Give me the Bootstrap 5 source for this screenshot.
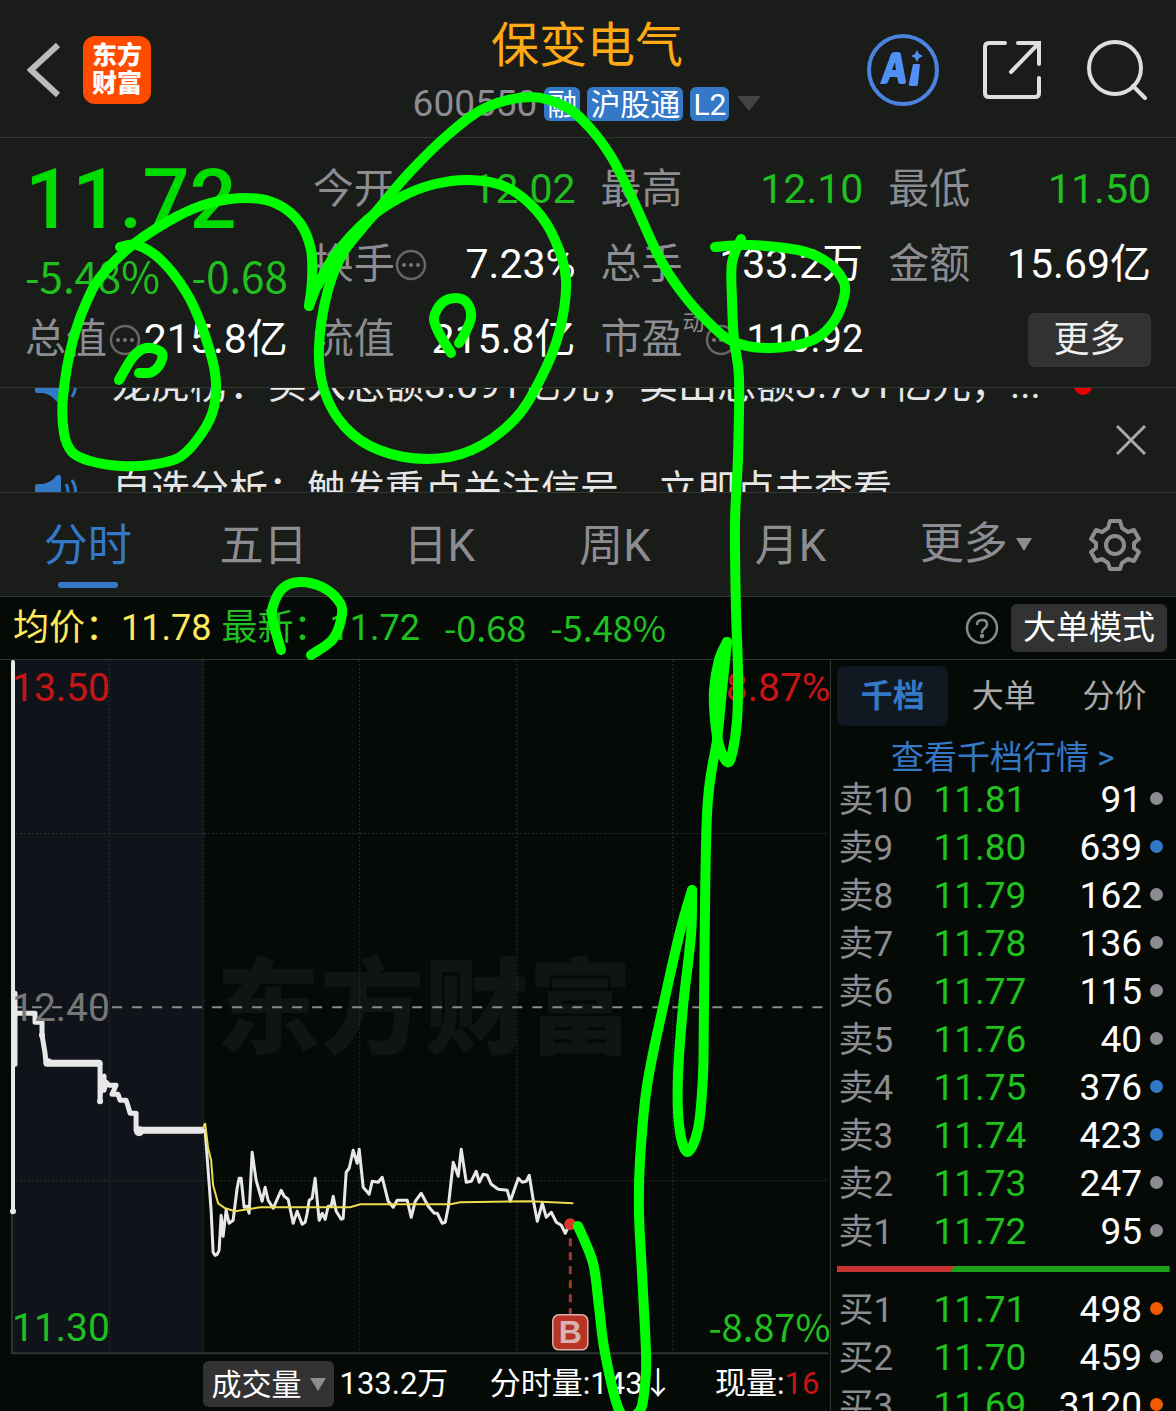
<!DOCTYPE html>
<html lang="zh-CN" data-bs-theme="dark">
<head>
<meta charset="utf-8">
<meta name="viewport" content="width=device-width, initial-scale=1">
<title>保变电气 600550</title>
<link href="https://cdn.jsdelivr.net/npm/bootstrap@5.3.0/dist/css/bootstrap.min.css" rel="stylesheet">
<style>
  :root { --panel:#191c19; --ink:#060a07; --rule:#333633; --muted:#8c8c92; --blue:#3478c8; --up:#c81414; --down:#1fc01f; --face:Roboto,"Noto Sans CJK SC",sans-serif; }
  body { margin:0; background:var(--ink); color:#fff; font-family:var(--face); }
  .quote-app { height:100vh; overflow:hidden; }
  .panel-bg { background:var(--panel); border-bottom:1px solid var(--rule); }
  .bare { background:none; border:0; padding:0; color:inherit; line-height:0; }
  .t-muted { color:var(--muted); } .t-blue { color:var(--blue); } .t-up { color:var(--up); } .t-down { color:var(--down); } .t-avg { color:#ffe95c; }
  .signed { font-family:"Noto Sans CJK SC",sans-serif; }
  svg { display:block; }

  .top-bar { height:138px; padding:3px 29px 0 27px; }
  .side { flex:1 1 0; }
  .tools { gap:43px; }
  .brand { width:68px; height:68px; margin-left:20px; border-radius:12px; background:#ff4b00; font-size:25px; line-height:28px; font-weight:900; padding-top:6px; }
  .stock-name { font-size:48px; line-height:58px; color:#ffa914; margin:0 0 10px; font-weight:400; font-family:"Noto Sans CJK SC",sans-serif; }
  .stock-code { font-size:37px; line-height:48px; }
  .tag { background:var(--blue); border-radius:6px; font-size:30px; line-height:36px; height:34px; padding:0 3px; margin-left:7px; }

  .stats { height:250px; padding:14px 25px 0; gap:25px; font-size:41px; }
  .stat-col { flex:1 1 0; min-width:0; }
  .stat { height:75px; line-height:75px; white-space:nowrap; }
  .last-price { font-size:83px; line-height:96px; height:96px; font-weight:500; color:#00dc00; }
  .change { height:54px; line-height:53px; font-size:42px; }
  .pe-mark { font-size:22px; line-height:42px; align-self:flex-start; }
  .pe-val { font-size:38px; }
  .more-btn { width:123px; height:54px; font-size:36px; line-height:50px; background:#323232; border:0; border-radius:6px; color:#eee; padding:0; }

  .ticker { height:105px; overflow:hidden; padding:0 30px 0 34px; }
  .ticker-list { margin-top:-55px; }
  .ticker-line { height:105px; gap:33px; font-size:39px; line-height:105px; white-space:nowrap; color:#e6e6e6; }
  .red-dot { width:18px; height:18px; border-radius:50%; background:#e60000; }

  .period-tabs { height:104px; padding-right:35px; font-size:44px; }
  .period-tabs a { color:var(--muted); text-decoration:none; flex:0 0 15.4%; line-height:107px; text-align:center; }
  .period-tabs a.current { color:var(--blue); position:relative; }
  .period-tabs a.current::after { content:""; position:absolute; left:50%; margin-left:-30px; bottom:8px; width:60px; height:6px; border-radius:3px; background:var(--blue); }
  .period-tabs a.wide { flex:1 1 0; padding-right:16px; }

  .info-bar { height:63px; padding:0 9px 0 13px; font-size:36px; line-height:62px; border-bottom:1px solid var(--rule); white-space:nowrap; }
  .info-bar .signed { line-height:58px; }
  .latest { margin-left:10px; }
  .mode-btn { width:156px; height:48px; border:0; border-radius:6px; background:#323232; color:#fff; font-size:33px; line-height:48px; padding:0; }

  .left-pane { flex:1 1 0; min-width:0; border-right:1px solid var(--rule); }
  .right-pane { flex:0 0 29.3%; padding:6px 6px 0; }
  .axis { position:absolute; font-size:39px; line-height:40px; }
  .axis.signed { font-size:38px; }
  .axis.start { left:12px; } .axis.end { right:0; }
  .axis.high { top:8px; } .axis.mid { top:328px; color:#777; } .axis.low { bottom:8px; } .axis.low.signed { bottom:10px; }
  .chart-foot { height:56px; padding:0 11px 0 24.5%; font-size:31px; line-height:52px; white-space:nowrap; }
  .vol-box { width:131px; height:46px; margin-right:5px; }
  .vol-box select { display:block; width:100%; height:46px; appearance:none; background:#323232; color:#fff; border:0; border-radius:6px; font:30px/42px "Noto Sans CJK SC",sans-serif; padding:0 0 4px 8px; }
  .vol-box svg { position:absolute; right:8px; top:17px; pointer-events:none; }

  .book-tabs button { flex:1 1 0; height:60px; border:0; border-radius:8px; background:none; color:#aaa; font-size:32px; line-height:60px; padding:0; }
  .book-tabs button.current { background:#101822; color:var(--blue); font-weight:700; }
  .book-link { display:block; text-align:center; color:var(--blue); text-decoration:none; font-size:33px; line-height:63px; height:51px; padding-right:2px; }
  .book { width:100%; border-collapse:collapse; table-layout:fixed; white-space:nowrap; }
  .book td, .book th { height:48px; line-height:44px; padding:0 0 2px; font-size:37px; font-weight:400; }
  .book th { width:96px; color:var(--muted); font-size:35px; line-height:48px; padding:0 0 0 1px; }
  .book .num { text-align:right; width:113px; }
  .book .mk { width:28px; }
  .lamp { display:block; width:13px; height:13px; border-radius:50%; background:#8c8c92; margin:0 0 3px 8px; }
  .lamp.b { background:#3478c8; } .lamp.o { background:#f05a00; }
  .ratio { display:block; width:100%; height:6px; margin:9px 0 15px; }
  .ink-layer { position:absolute; left:0; top:0; width:100%; pointer-events:none; }
</style>
<script src="https://cdn.jsdelivr.net/npm/bootstrap@5.3.0/dist/js/bootstrap.bundle.min.js"></script>
</head>
<body>
<div class="quote-app position-relative">

<header class="top-bar panel-bg d-flex align-items-center">
  <div class="side d-flex align-items-center">
    <button class="bare" aria-label="返回"><svg width="36" height="56" fill="none" stroke="#bbb" stroke-width="6"><path d="M31 3 4 28 31 53"/></svg></button>
    <div class="brand text-center">东方<br>财富</div>
  </div>
  <div class="text-center">
    <h1 class="stock-name">保变电气</h1>
    <div class="stock-code t-muted d-flex align-items-center">600550
      <span class="tag text-white">融</span><span class="tag text-white">沪股通</span><span class="tag text-white">L2</span>
      <svg class="ms-2" width="24" height="16"><path d="M0 0h24L12 15z" fill="#444"/></svg>
    </div>
  </div>
  <div class="side tools d-flex align-items-center justify-content-end">
    <button class="bare" aria-label="AI"><svg width="74" height="74"><circle cx="37" cy="37" r="34" fill="none" stroke="#4a84e0" stroke-width="4"/><path fill="#5090f5" fill-rule="evenodd" d="M14 51 25 21q1-2 4-2h3q3 0 3 3l5 27q0 2-2 2h-3q-3 0-3-3l-1-4h-7l-2 5q-1 2-3 2zM26 37h4l-1-8zM47 31h7l-2 20q0 2-3 2h-4q-3 0-2-3zM51 17l2 4 4 2-4 2-2 4-2-4-4-2 4-2z"/></svg></button>
    <button class="bare" aria-label="分享"><svg width="60" height="60" fill="none" stroke="#dedede" stroke-width="4" stroke-linecap="round"><path d="M22 3H6q-4 0-4 4v46q0 4 4 4h46q4 0 4-4V38M35 3h21v21M56 3 28 32"/></svg></button>
    <button class="bare" aria-label="搜索"><svg width="61" height="62" fill="none" stroke="#dedede" stroke-width="4" stroke-linecap="round"><circle cx="29" cy="29" r="26"/><path d="m47 47 12 12"/></svg></button>
  </div>
</header>

<section class="stats panel-bg d-flex">
  <div class="stat-col">
    <div class="last-price">11.72</div>
    <div class="change signed t-down d-flex justify-content-between"><span>-5.48%</span><span>-0.68</span></div>
    <div class="stat d-flex justify-content-between align-items-center"><span class="t-muted">总值</span><svg width="32" height="32"><circle cx="16" cy="16" r="14" fill="none" stroke="#666" stroke-width="2.5"/><g fill="#777"><circle cx="9" cy="16" r="2"/><circle cx="16" cy="16" r="2"/><circle cx="23" cy="16" r="2"/></g></svg><span>215.8亿</span></div>
  </div>
  <div class="stat-col">
    <div class="stat d-flex justify-content-between"><span class="t-muted">今开</span><span class="t-down">12.02</span></div>
    <div class="stat d-flex align-items-center"><span class="t-muted">换手</span><svg width="32" height="32"><circle cx="16" cy="16" r="14" fill="none" stroke="#666" stroke-width="2.5"/><g fill="#777"><circle cx="9" cy="16" r="2"/><circle cx="16" cy="16" r="2"/><circle cx="23" cy="16" r="2"/></g></svg><span class="ms-auto">7.23%</span></div>
    <div class="stat d-flex justify-content-between"><span class="t-muted">流值</span><span>215.8亿</span></div>
  </div>
  <div class="stat-col">
    <div class="stat d-flex justify-content-between"><span class="t-muted">最高</span><span class="t-down">12.10</span></div>
    <div class="stat d-flex justify-content-between"><span class="t-muted">总手</span><span>133.2万</span></div>
    <div class="stat d-flex align-items-center"><span class="t-muted">市盈</span><span class="pe-mark t-muted">动</span><svg width="32" height="32"><circle cx="16" cy="16" r="14" fill="none" stroke="#666" stroke-width="2.5"/><g fill="#777"><circle cx="9" cy="16" r="2"/><circle cx="16" cy="16" r="2"/><circle cx="23" cy="16" r="2"/></g></svg><span class="pe-val ms-auto">110.92</span></div>
  </div>
  <div class="stat-col">
    <div class="stat d-flex justify-content-between"><span class="t-muted">最低</span><span class="t-down">11.50</span></div>
    <div class="stat d-flex justify-content-between"><span class="t-muted">金额</span><span>15.69亿</span></div>
    <div class="stat d-flex justify-content-end align-items-center"><button class="more-btn">更多</button></div>
  </div>
</section>

<section class="ticker panel-bg d-flex align-items-center justify-content-between">
  <div class="ticker-list align-self-start">
    <div class="ticker-line d-flex align-items-center"><svg width="45" height="34" fill="#3478c8"><path d="M1 12q0-2 3-2h5q9-2 13-8 4-3 5 1v28q-1 4-5 1-4-6-13-8H4q-3 0-3-2z"/><path d="M32 10q4 7 0 14M38 6q7 11 0 22" fill="none" stroke="#3478c8" stroke-width="3"/></svg><span>龙虎榜：买入总额3.091亿元，卖出总额3.761亿元，...</span><span class="red-dot"></span></div>
    <div class="ticker-line d-flex align-items-center"><svg width="45" height="34" fill="#3478c8"><path d="M1 12q0-2 3-2h5q9-2 13-8 4-3 5 1v28q-1 4-5 1-4-6-13-8H4q-3 0-3-2z"/><path d="M32 10q4 7 0 14M38 6q7 11 0 22" fill="none" stroke="#3478c8" stroke-width="3"/></svg><span>自选分析：触发重点关注信号，立即点击查看</span></div>
  </div>
  <button class="bare" aria-label="关闭"><svg width="30" height="32" stroke="#aaa" stroke-width="3"><path d="M1 2 29 30M29 2 1 30"/></svg></button>
</section>

<nav class="period-tabs panel-bg d-flex">
  <a href="#" class="current">分时</a><a href="#">五日</a><a href="#">日K</a><a href="#">周K</a><a href="#">月K</a>
  <a href="#" class="wide d-flex align-items-center justify-content-center">更多<svg class="ms-2" width="16" height="14"><path d="M0 0h16L8 13z" fill="#8c8c92"/></svg></a>
  <button class="bare" aria-label="设置"><svg width="52" height="52" viewBox="0 0 52 52" fill="none" stroke="#8c8c92" stroke-width="4" stroke-linejoin="round"><path d="M21 2h10l2 7 6 4 6-2 5 9-5 4v5l5 4-5 9-6-2-6 4-2 6H21l-2-6-6-4-6 2-5-9 5-4v-5l-5-4 5-9 6 2 6-4z"/><circle cx="26" cy="26" r="9"/></svg></button>
</nav>

<div class="info-bar d-flex align-items-center">
  <span class="t-avg">均价：11.78</span>
  <span class="latest t-down d-flex"><span>最新：11.72</span><span class="signed ms-4">-0.68</span><span class="signed ms-4">-5.48%</span></span>
  <button class="bare ms-auto me-2 pe-1" aria-label="帮助"><svg width="34" height="34" fill="none" stroke="#8a8a8a" stroke-width="2.5"><circle cx="17" cy="17" r="15"/><path d="M12 14q0-5 5-5t5 4q0 3-3 5-2 1-2 4"/><circle cx="17" cy="25" r="1" /></svg></button>
  <button class="mode-btn">大单模式</button>
</div>

<main class="d-flex">
  <section class="left-pane">
    <div class="position-relative">
      <svg width="100%" viewBox="0 660 830 696">
        <rect x="12" y="660" width="192" height="693" fill="#10141a"/>
        <text x="216" y="1046" font-size="104" font-weight="900" fill="#111511">东方财富</text>
        <g stroke="#2c302d" stroke-dasharray="2 2"><path d="M109.5 660V1353M203.5 660V1353M359.5 660V1353M516.5 660V1353M672.5 660V1353M12 833.5H828M12 1180.5H828"/></g>
        <path d="M12 660V1353H828" fill="none" stroke="#303330" stroke-width="2"/>
        <path d="M12 1007H824" stroke="#8a8a8a" stroke-width="2" stroke-dasharray="10 10"/>
        <g fill="none" stroke="#e8e8e8" stroke-linejoin="round" stroke-linecap="round">
          <path stroke-width="4" d="M13 662V1211"/>
          <path stroke-width="5" d="M15 993V1013V1064M16 1013H35V1022H42V1035L45 1053L46 1063M100 1063V1101L101 1078L104 1076L104 1090L106 1082L109 1085H116L112 1094H118L120 1100H126L128 1106L130 1113H136V1130"/>
          <path stroke-width="7" d="M47 1063H99M138 1130H201"/>
          <path stroke-width="3" d="M205 1130 L208 1170 211 1210 213 1252 215 1255 217 1254 219 1250 221 1215 223 1236 226 1210 229 1223 233 1220 237 1188 239 1178 241 1178 244 1207 247 1206 249 1213 252 1152 256 1180 262 1201 265 1187 268 1200 273 1208 281 1190 284 1196 288 1199 293 1223 297 1211 302 1224 305 1222 307 1213 309 1200 312 1198 315 1178 317 1200 319 1220 322 1213 325 1219 328 1206 331 1206 333 1196 336 1211 341 1219 343 1218 346 1172 349 1168 353 1150 357 1163 359 1149 363 1187 369 1194 372 1181 378 1182 382 1177 388 1201 393 1207 397 1200 407 1200 411 1217 415 1201 421 1193 428 1206 434 1213 437 1213 442 1223 445 1222 448 1207 453 1162 458 1176 461 1149 466 1182 471 1181 476 1171 479 1182 483 1174 487 1175 491 1184 498 1189 507 1190 510 1201 518 1178 522 1182 526 1181 529 1175 533 1200 537 1221 542 1203 546 1217 551 1212 556 1222 561 1225 565 1233 570 1222"/>
        </g>
        <g fill="#e8e8e8"><circle cx="13" cy="1211" r="3"/><circle cx="42" cy="1035" r="3"/><circle cx="100" cy="1101" r="3"/><circle cx="139" cy="1131" r="5"/><circle cx="48" cy="1062" r="4"/></g>
        <path fill="none" stroke="#f0dc50" stroke-width="2" d="M203 1128 205 1123 208 1148 211 1160 213 1185 218 1203 225 1208 235 1211 260 1207 350 1207 360 1204 450 1204 460 1202 530 1201 573 1203"/>
        <circle cx="570" cy="1224" r="6" fill="#d8372b"/>
        <path d="M570 1238V1314" stroke="#a03a30" stroke-width="3" stroke-dasharray="8 6"/>
        <rect x="552.5" y="1314.500" width="35" height="35" rx="6" fill="#b83426" stroke="#dcb0aa" stroke-width="1.500"/>
        <text x="570" y="1343" text-anchor="middle" font-family="Liberation Sans, sans-serif" font-weight="700" font-size="32" fill="#d8b4b0">B</text>
      </svg>
      <span class="axis start high t-up">13.50</span>
      <span class="axis start mid">12.40</span>
      <span class="axis start low t-down">11.30</span>
      <span class="axis end high t-up">8.87%</span>
      <span class="axis end low signed t-down">-8.87%</span>
    </div>
    <div class="chart-foot d-flex align-items-center">
      <div class="vol-box position-relative"><select aria-label="指标"><option>成交量</option></select><svg width="16" height="14"><path d="M0 0h16L8 13z" fill="#8c8c92"/></svg></div>
      <span>133.2万</span><span class="ms-auto">分时量:143↓</span><span class="ms-auto">现量:<span class="t-up">16</span></span>
    </div>
  </section>

  <aside class="right-pane">
    <div class="book-tabs d-flex"><button class="current">千档</button><button>大单</button><button>分价</button></div>
    <a class="book-link" href="#">查看千档行情 &gt;</a>
    <table class="book">
      <tr><th>卖10</th><td class="t-down">11.81</td><td class="num">91</td><td class="mk"><i class="lamp"></i></td></tr>
      <tr><th>卖9</th><td class="t-down">11.80</td><td class="num">639</td><td class="mk"><i class="lamp b"></i></td></tr>
      <tr><th>卖8</th><td class="t-down">11.79</td><td class="num">162</td><td class="mk"><i class="lamp"></i></td></tr>
      <tr><th>卖7</th><td class="t-down">11.78</td><td class="num">136</td><td class="mk"><i class="lamp"></i></td></tr>
      <tr><th>卖6</th><td class="t-down">11.77</td><td class="num">115</td><td class="mk"><i class="lamp"></i></td></tr>
      <tr><th>卖5</th><td class="t-down">11.76</td><td class="num">40</td><td class="mk"><i class="lamp"></i></td></tr>
      <tr><th>卖4</th><td class="t-down">11.75</td><td class="num">376</td><td class="mk"><i class="lamp b"></i></td></tr>
      <tr><th>卖3</th><td class="t-down">11.74</td><td class="num">423</td><td class="mk"><i class="lamp b"></i></td></tr>
      <tr><th>卖2</th><td class="t-down">11.73</td><td class="num">247</td><td class="mk"><i class="lamp"></i></td></tr>
      <tr><th>卖1</th><td class="t-down">11.72</td><td class="num">95</td><td class="mk"><i class="lamp"></i></td></tr>
    </table>
    <svg class="ratio" viewBox="0 0 333 6" preserveAspectRatio="none"><path d="M0 0h333v6H0z" fill="#1ba01b"/><path d="M0 0h118l-5 6H0z" fill="#c83232"/></svg>
    <table class="book">
      <tr><th>买1</th><td class="t-down">11.71</td><td class="num">498</td><td class="mk"><i class="lamp o"></i></td></tr>
      <tr><th>买2</th><td class="t-down">11.70</td><td class="num">459</td><td class="mk"><i class="lamp"></i></td></tr>
      <tr><th>买3</th><td class="t-down">11.69</td><td class="num">3120</td><td class="mk"><i class="lamp o"></i></td></tr>
    </table>
  </aside>
</main>

<svg class="ink-layer" id="ink" viewBox="0 0 1176 1411" fill="none" stroke="#00ff00" stroke-width="10" stroke-linecap="round" stroke-linejoin="round" aria-hidden="true"></svg>
</div>

<script>
  // Freehand strokes: each list of x,y points is drawn as one smooth curve.
  const strokes = [
    [120,247,137,245,161,260,186,292,202,327,215,373,214,407,202,433,180,457,150,465,120,466,90,461,72,452,64,433,63,397,73,340,92,290,109,267,135,243,176,217,210,203,247,198,277,204,300,223,311,250,312,280,309,306],
    [309,306,320,280,340,255,375,213,409,173,450,133,487,107,531,97,566,107,590,128,612,158,633,200,659,257,680,290,708,322,734,342,772,348,813,340,835,320,845,292,840,275,824,260,798,250,749,245,715,247],
    [318,285,335,255,367,220,401,197,435,184,470,180,506,187,536,210,555,240,566,280,559,333,540,380,514,420,472,450,427,459,379,450,345,427,324,390,319,347,328,290,345,250,375,213],
    [741,239,732,263,732,300,734,340,739,377,738,457,735,523,736,610,738,671,737,721,732,754,727,762,719,745,715,720,714,690,719,660,727,642],
    [727,642,722,690,717,740,707,814,704,1007,703,1075,698,1129,687,1152,679,1125,678,1075,683,1007,691,935,692,890],
    [692,890,680,932,663,1007,647,1086,640,1160,639,1213,642,1273,646,1353,645,1385,639,1412,620,1412,605,1353,599,1307,593,1263,578,1226],
    [723,655,719,680,718,705],
    [119,380,133,357,146,348,161,352,161,362,152,372,139,373],
    [451,353,439,333,434,318,442,303,456,298,467,303,471,317,465,333,459,343],
    [281,650,273,621,273,606,283,588,300,582,322,587,338,600,342,614,333,639,311,655]
  ];
  const layer = document.getElementById('ink');
  for (const s of strokes) {
    const n = s.length / 2, p = i => { i = Math.max(0, Math.min(n - 1, i)); return [s[2*i], s[2*i+1]]; };
    let d = 'M' + p(0);
    for (let i = 0; i < n - 1; i++) {
      const [a, b, c, e] = [p(i-1), p(i), p(i+1), p(i+2)];
      d += 'C' + [b[0]+(c[0]-a[0])/6, b[1]+(c[1]-a[1])/6, c[0]-(e[0]-b[0])/6, c[1]-(e[1]-b[1])/6, c[0], c[1]];
    }
    const path = document.createElementNS('http://www.w3.org/2000/svg', 'path');
    path.setAttribute('d', d);
    layer.appendChild(path);
  }
</script>
</body>
</html>
